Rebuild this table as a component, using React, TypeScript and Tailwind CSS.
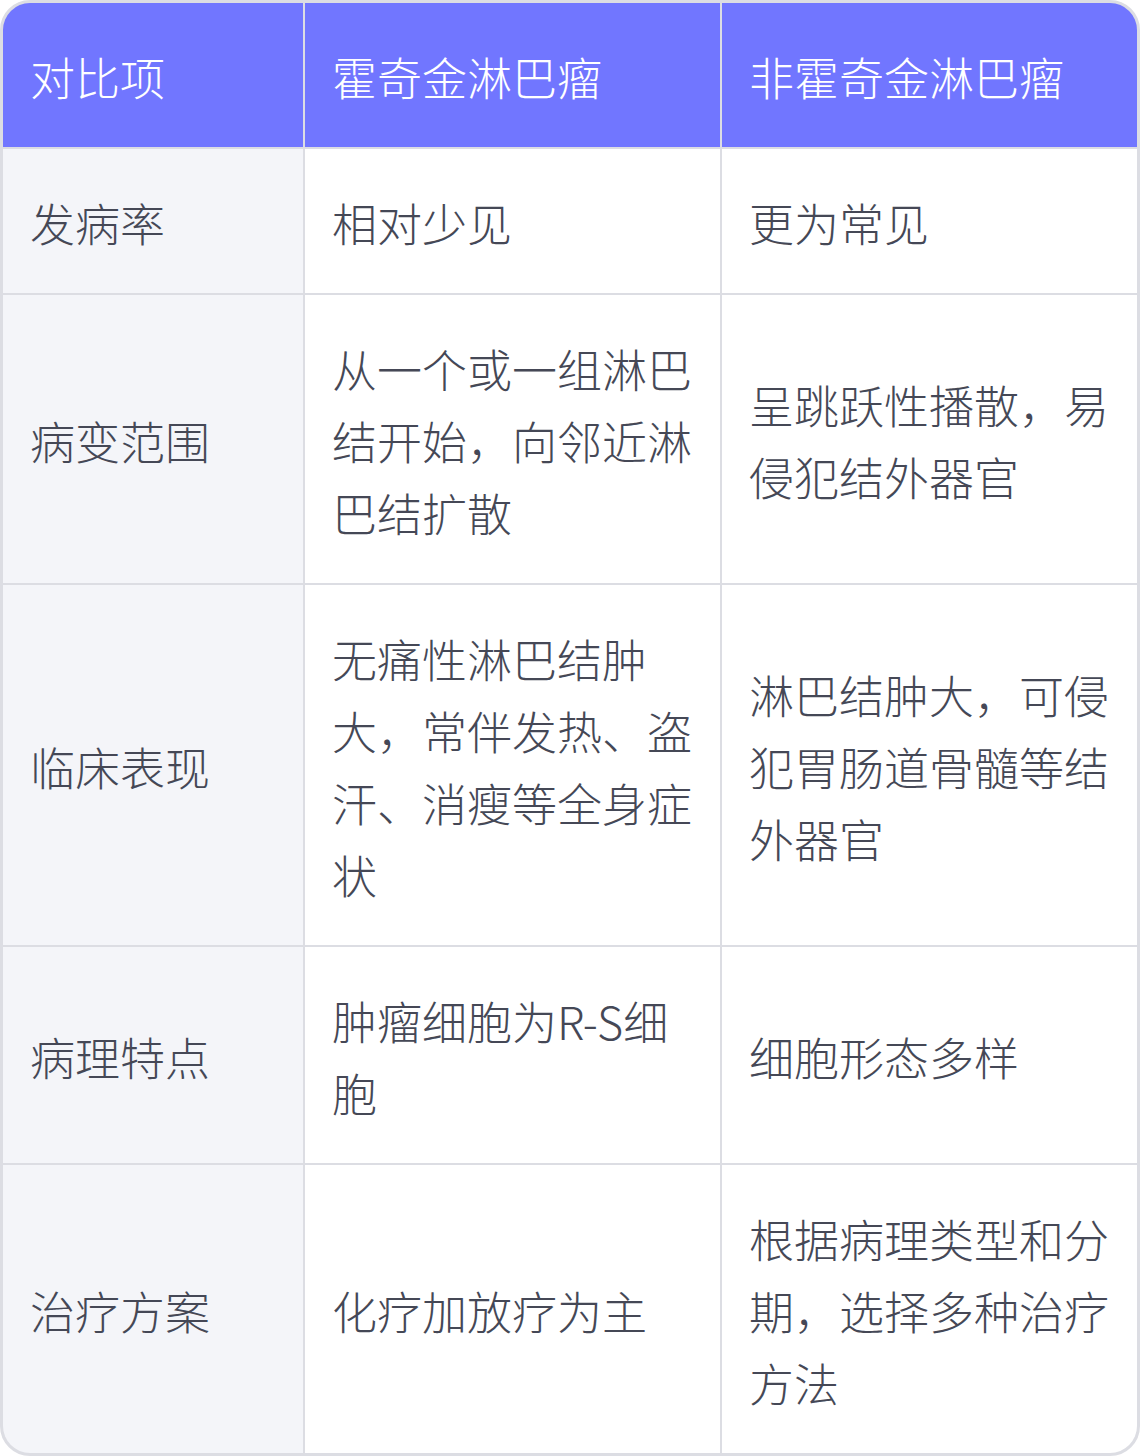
import React from "react";

const rows: string[][] = [
  ["发病率", "相对少见", "更为常见"],
  ["病变范围", "从一个或一组淋巴结开始，向邻近淋巴结扩散", "呈跳跃性播散，易侵犯结外器官"],
  ["临床表现", "无痛性淋巴结肿大，常伴发热、盗汗、消瘦等全身症状", "淋巴结肿大，可侵犯胃肠道骨髓等结外器官"],
  ["病理特点", "肿瘤细胞为R-S细胞", "细胞形态多样"],
  ["治疗方案", "化疗加放疗为主", "根据病理类型和分期，选择多种治疗方法"],
];

function App() {
  return (
    <div className="w-[1140px] font-['Noto_Sans_CJK_SC','Noto_Sans',sans-serif] text-[45px] font-light leading-[72px]">
      <div className="overflow-hidden rounded-[30px] border-[3px] border-[#dcdde3] bg-[#dcdde3]">
        <div className="grid grid-cols-[300px_415px_415px] gap-[2px]">
          {/* header */}
          {["对比项", "霍奇金淋巴瘤", "非霍奇金淋巴瘤"].map((h) => (
            <div key={h} className="flex items-center bg-[#7176ff] px-[27px] pt-[38px] pb-[34px] text-white">
              {h}
            </div>
          ))}

          {/* body */}
          {rows.map((r) => (
            <React.Fragment key={r[0]}>
              <div className="flex items-center bg-[#f4f5f9] px-[27px] pt-[38px] pb-[34px] text-[#454856]">{r[0]}</div>
              <div className="flex items-center bg-white px-[27px] pt-[38px] pb-[34px] text-[#454856]">{r[1]}</div>
              <div className="flex items-center bg-white px-[27px] pt-[38px] pb-[34px] text-[#454856]">{r[2]}</div>
            </React.Fragment>
          ))}
        </div>
      </div>
    </div>
  );
}

export default App;
